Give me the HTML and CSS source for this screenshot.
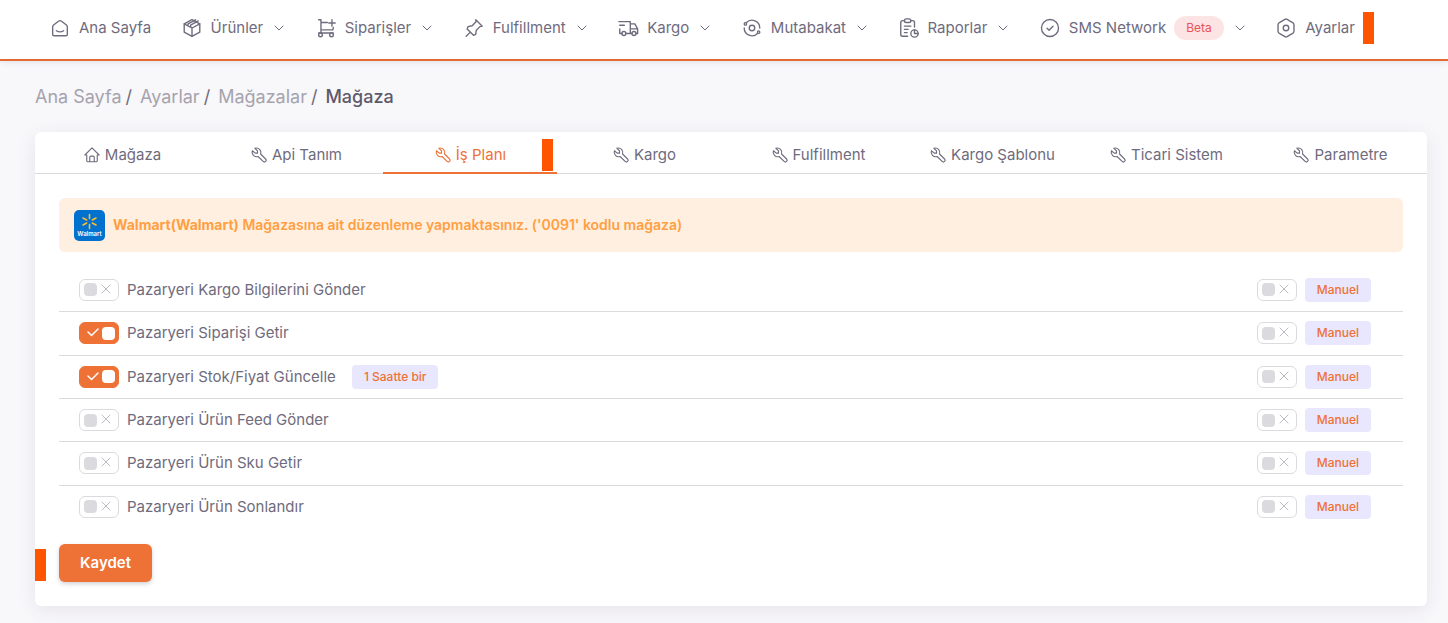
FILE: index.html
```html
<!DOCTYPE html>
<html lang="tr">
<head>
<meta charset="utf-8">
<meta name="viewport" content="width=device-width, initial-scale=1">
<title>Mağaza</title>
<link rel="stylesheet" href="styles.css">
</head>
<body>
<svg class="sprite" aria-hidden="true">
  <symbol id="chevron" viewBox="0 0 12 12"><path d="M2 4l4 4 4-4"/></symbol>
  <symbol id="smart-home" viewBox="0 0 24 24"><path d="M19 8.700l-5.300-4.100a2.700 2.700 0 0 0-3.400 0L5 8.700A2.700 2.700 0 0 0 4 11v8a1.500 1.500 0 0 0 1.500 1.500h13A1.500 1.500 0 0 0 20 19v-8a2.700 2.700 0 0 0-1-2.300z"/><path d="M8 15c2.200 1.400 5.800 1.400 8 0"/></symbol>
  <symbol id="box" viewBox="0 0 24 24"><path d="M12 2.800l8.500 4.700v9L12 21.200l-8.500-4.700v-9z"/><path d="M3.500 7.500L12 12l8.500-4.500M12 12v9M7.700 9.800V7.500l8.300-4.400M10.500 11V8.800l8.300-4.500"/></symbol>
  <symbol id="cart" viewBox="0 0 24 24"><circle cx="6" cy="19.500" r="2"/><circle cx="18" cy="19.500" r="2"/><path d="M4 3h2.500v14.500M4 17.500h16M6.500 6h7M6.500 14h13l.500-2.500M15 6.500h7M18.500 3v7"/></symbol>
  <symbol id="pin" viewBox="0 0 24 24"><path d="M14 3l7 7-2.500.500-4 4-.700 4.500-2.300 1L4.500 13l1-2.500L10 9.500l4-4zM8 16.500L3.500 21"/></symbol>
  <symbol id="truck" viewBox="0 0 24 24"><circle cx="7.500" cy="18" r="2.200"/><circle cx="18.500" cy="18" r="2.200"/><path d="M2 5h12.500v13M9.700 18h6.500M5.300 18H3v-5M3 9h5M14.500 7.500h5L22.500 13v5h-1.700M14.500 13h8"/></symbol>
  <symbol id="cycle" viewBox="0 0 24 24"><circle cx="12" cy="12" r="3"/><path d="M20.500 12A8.500 8.500 0 0 0 6 6M3.500 12A8.500 8.500 0 0 0 18 18"/><circle cx="4.800" cy="7.500" r="1.300"/><circle cx="19.200" cy="16.500" r="1.300"/></symbol>
  <symbol id="report" viewBox="0 0 24 24"><path d="M10.500 21H5a2 2 0 0 1-2-2V6a2 2 0 0 1 2-2h2M14 4h2a2 2 0 0 1 2 2v5"/><rect x="7" y="2" width="7" height="4" rx="2"/><path d="M7 10h7M7 13.500h4M7 17h3M18 14v4h4"/><circle cx="18" cy="18" r="4"/></symbol>
  <symbol id="circle-check" viewBox="0 0 24 24"><circle cx="12" cy="12" r="9.300"/><path d="M8.800 12.200l2.200 2.300 4.300-4.500"/></symbol>
  <symbol id="hexagon" viewBox="0 0 24 24"><path d="M10.800 2.600a2.400 2.400 0 0 1 2.400 0l6.500 3.900a2.400 2.400 0 0 1 1 2v7a2.400 2.400 0 0 1-1 2l-6.500 3.900a2.400 2.400 0 0 1-2.400 0l-6.500-3.900a2.400 2.400 0 0 1-1-2v-7a2.400 2.400 0 0 1 1-2z"/><circle cx="12" cy="12" r="3"/></symbol>
  <symbol id="home" viewBox="0 0 24 24"><path d="M5 12H2.500L12 2.500l9.500 9.500H19M5 12v7.500A1.500 1.500 0 0 0 6.500 21h11a1.500 1.500 0 0 0 1.500-1.500V12M9 21v-6a1.500 1.500 0 0 1 1.500-1.500h3A1.500 1.500 0 0 1 15 15v6"/></symbol>
  <symbol id="tool" viewBox="0 0 24 24"><path d="M7 9.500h3v-3L6.500 3a6 6 0 0 1 7.600 7.700l6.700 6.600a2.300 2.300 0 0 1-3.300 3.300l-6.700-6.600A6 6 0 0 1 3.200 6.400z"/></symbol>
  <symbol id="cross" viewBox="0 0 12 12"><path d="M2 2l8 8M10 2l-8 8"/></symbol>
  <symbol id="check" viewBox="0 0 12 12"><path d="M1 6l3.500 3.500L11 3"/></symbol>
</svg>

<header class="topbar">
  <nav class="menu" aria-label="Ana menü">
    <a class="menu-item" href="#"><svg class="icon"><use href="#smart-home"/></svg>Ana Sayfa</a>
    <a class="menu-item" href="#"><svg class="icon"><use href="#box"/></svg>Ürünler<svg class="chevron"><use href="#chevron"/></svg></a>
    <a class="menu-item" href="#"><svg class="icon"><use href="#cart"/></svg>Siparişler<svg class="chevron"><use href="#chevron"/></svg></a>
    <a class="menu-item" href="#"><svg class="icon"><use href="#pin"/></svg>Fulfillment<svg class="chevron"><use href="#chevron"/></svg></a>
    <a class="menu-item" href="#"><svg class="icon"><use href="#truck"/></svg>Kargo<svg class="chevron"><use href="#chevron"/></svg></a>
    <a class="menu-item" href="#"><svg class="icon"><use href="#cycle"/></svg>Mutabakat<svg class="chevron"><use href="#chevron"/></svg></a>
    <a class="menu-item" href="#"><svg class="icon"><use href="#report"/></svg>Raporlar<svg class="chevron"><use href="#chevron"/></svg></a>
    <a class="menu-item" href="#"><svg class="icon"><use href="#circle-check"/></svg>SMS Network<span class="beta">Beta</span><svg class="chevron"><use href="#chevron"/></svg></a>
    <a class="menu-item" href="#"><svg class="icon"><use href="#hexagon"/></svg>Ayarlar<span class="marker"></span></a>
  </nav>
</header>

<main class="page">
  <nav class="breadcrumb" aria-label="Konum">
    <a href="#">Ana Sayfa</a><span class="slash">/</span><a href="#">Ayarlar</a><span class="slash">/</span><a href="#">Mağazalar</a><span class="slash">/</span><span class="current">Mağaza</span>
  </nav>

  <section class="card">
    <div class="tabs" role="tablist">
      <button class="tab" type="button" role="tab"><svg class="tab-icon"><use href="#home"/></svg>Mağaza</button>
      <button class="tab" type="button" role="tab"><svg class="tab-icon"><use href="#tool"/></svg>Api Tanım</button>
      <button class="tab active" type="button" role="tab" aria-selected="true"><svg class="tab-icon"><use href="#tool"/></svg>İş Planı<span class="marker tab-marker"></span></button>
      <button class="tab" type="button" role="tab"><svg class="tab-icon"><use href="#tool"/></svg>Kargo</button>
      <button class="tab" type="button" role="tab"><svg class="tab-icon"><use href="#tool"/></svg>Fulfillment</button>
      <button class="tab" type="button" role="tab"><svg class="tab-icon"><use href="#tool"/></svg>Kargo Şablonu</button>
      <button class="tab" type="button" role="tab"><svg class="tab-icon"><use href="#tool"/></svg>Ticari Sistem</button>
      <button class="tab" type="button" role="tab"><svg class="tab-icon"><use href="#tool"/></svg>Parametre</button>
    </div>

    <form class="card-body">
      <div class="alert">
        <svg class="logo" viewBox="0 0 31 31" role="img" aria-label="Walmart">
          <rect width="31" height="31" rx="5" fill="#0071ce"/>
          <path d="M15.500 4.500v4M15.500 14.500v4M9 8l3.700 2M22 8l-3.700 2M9 15l3.700-2M22 15l-3.700-2" stroke="#fdbb30" stroke-width="1.600" stroke-linecap="round"/>
          <text class="logo-text" x="15.500" y="26" text-anchor="middle">Walmart</text>
        </svg>
        <p class="alert-text"><strong>Walmart(Walmart)</strong> Mağazasına ait düzenleme yapmaktasınız. ('0091' kodlu mağaza)</p>
      </div>

      <div class="plans">
        <div class="plan">
          <label class="option"><span class="switch"><input type="checkbox"><svg class="off"><use href="#cross"/></svg><svg class="on"><use href="#check"/></svg></span>Pazaryeri Kargo Bilgilerini Gönder</label>
          <label class="option manual"><span class="switch"><input type="checkbox"><svg class="off"><use href="#cross"/></svg><svg class="on"><use href="#check"/></svg></span><span class="tag">Manuel</span></label>
        </div>
        <div class="plan">
          <label class="option"><span class="switch"><input type="checkbox" checked><svg class="off"><use href="#cross"/></svg><svg class="on"><use href="#check"/></svg></span>Pazaryeri Siparişi Getir</label>
          <label class="option manual"><span class="switch"><input type="checkbox"><svg class="off"><use href="#cross"/></svg><svg class="on"><use href="#check"/></svg></span><span class="tag">Manuel</span></label>
        </div>
        <div class="plan">
          <label class="option"><span class="switch"><input type="checkbox" checked><svg class="off"><use href="#cross"/></svg><svg class="on"><use href="#check"/></svg></span>Pazaryeri Stok/Fiyat Güncelle</label>
          <span class="tag">1 Saatte bir</span>
          <label class="option manual"><span class="switch"><input type="checkbox"><svg class="off"><use href="#cross"/></svg><svg class="on"><use href="#check"/></svg></span><span class="tag">Manuel</span></label>
        </div>
        <div class="plan">
          <label class="option"><span class="switch"><input type="checkbox"><svg class="off"><use href="#cross"/></svg><svg class="on"><use href="#check"/></svg></span>Pazaryeri Ürün Feed Gönder</label>
          <label class="option manual"><span class="switch"><input type="checkbox"><svg class="off"><use href="#cross"/></svg><svg class="on"><use href="#check"/></svg></span><span class="tag">Manuel</span></label>
        </div>
        <div class="plan">
          <label class="option"><span class="switch"><input type="checkbox"><svg class="off"><use href="#cross"/></svg><svg class="on"><use href="#check"/></svg></span>Pazaryeri Ürün Sku Getir</label>
          <label class="option manual"><span class="switch"><input type="checkbox"><svg class="off"><use href="#cross"/></svg><svg class="on"><use href="#check"/></svg></span><span class="tag">Manuel</span></label>
        </div>
        <div class="plan">
          <label class="option"><span class="switch"><input type="checkbox"><svg class="off"><use href="#cross"/></svg><svg class="on"><use href="#check"/></svg></span>Pazaryeri Ürün Sonlandır</label>
          <label class="option manual"><span class="switch"><input type="checkbox"><svg class="off"><use href="#cross"/></svg><svg class="on"><use href="#check"/></svg></span><span class="tag">Manuel</span></label>
        </div>
      </div>

      <div class="actions">
        <span class="marker save-marker"></span>
        <button class="save" type="button">Kaydet</button>
      </div>
    </form>
  </section>
</main>
</body>
</html>
```
FILE: styles.css
```css
* {
  box-sizing: border-box;
}

body {
  margin: 0;
  background: #f8f7fa;
  color: #6f6b7d;
  font: 15px/22px Inter, "Liberation Sans", sans-serif;
}

svg {
  flex: none;
  fill: none;
  stroke: currentColor;
  stroke-width: 1.5;
  stroke-linecap: round;
  stroke-linejoin: round;
}

a {
  color: inherit;
  text-decoration: none;
}

.sprite {
  display: none;
}

.marker {
  width: 11px;
  height: 32px;
  background: #ff5500;
}

/* Top menu */
.topbar {
  padding: 0 74px 0 49px;
  background: #fff;
  border-bottom: 2px solid #e46a34;
  box-shadow: 0 1px 6px rgba(75, 70, 92, 0.12);
}

.menu {
  display: flex;
  justify-content: space-between;
  height: 59px;
  padding-bottom: 4px;
}

.menu-item {
  display: flex;
  align-items: center;
  gap: 8px;
  white-space: nowrap;
}

.icon {
  width: 22px;
  height: 22px;
}

.chevron {
  width: 12px;
  height: 12px;
  margin-left: 2px;
  stroke-width: 1;
}

.beta {
  padding: 1px 12px;
  border-radius: 12px;
  background: #fce4e5;
  color: #ea5455;
  font-size: 12px;
}

/* Breadcrumb */
.page {
  padding: 0 21px 17px 35px;
}

.breadcrumb {
  display: flex;
  padding: 22px 0;
  color: #a5a3ae;
  font-size: 18px;
  line-height: 27px;
}

.slash {
  padding: 0 8px 0 4px;
  color: #6f6b7d;
}

.current {
  color: #5d596c;
  font-weight: 500;
}

/* Card and tabs */
.card {
  background: #fff;
  border-radius: 6px;
  box-shadow: 0 4px 18px rgba(75, 70, 92, 0.1);
}

.tabs {
  display: grid;
  grid-template-columns: repeat(8, 1fr);
  box-shadow: inset 0 -1px #dbdade;
}

.tab {
  position: relative;
  display: flex;
  align-items: center;
  justify-content: center;
  gap: 4px;
  height: 42px;
  padding: 6px 0 0;
  border: 0;
  border-bottom: 2px solid transparent;
  background: none;
  color: inherit;
  font: inherit;
}

.tab.active {
  border-bottom-color: #ee7136;
  color: #ee7136;
}

.tab-icon {
  width: 18px;
  height: 18px;
}

.tab-marker {
  position: absolute;
  top: 7px;
  right: 4px;
}

.card-body {
  padding: 24px;
}

.alert {
  display: flex;
  align-items: center;
  gap: 8px;
  min-height: 54px;
  padding: 0 15px;
  border-radius: 6px;
  background: #ffefe0;
  color: #ff9f43;
}

.alert-text {
  margin: 0;
  font-size: 14px;
  font-weight: 600;
}

.alert strong {
  font-weight: 700;
}

.logo {
  width: 31px;
  height: 31px;
  stroke: none;
}

.logo-text {
  fill: #fff;
  font-size: 6px;
  font-weight: 600;
}

/* Plan rows */
.plans {
  display: grid;
  grid-auto-rows: 1fr;
  min-height: 260px;
  margin-top: 16px;
}

.plan {
  display: flex;
  align-items: center;
  gap: 16px;
  padding: 0 32px 0 20px;
}

.plan + .plan {
  border-top: 1px solid #dbdade;
}

.option {
  display: flex;
  align-items: center;
  gap: 8px;
}

.manual {
  margin-left: auto;
}

.switch {
  position: relative;
  display: flex;
}

.switch input {
  display: flex;
  align-items: center;
  width: 40px;
  height: 22px;
  margin: 0;
  padding: 0 4px;
  border: 1px solid #dbdade;
  border-radius: 6px;
  background: #fff;
  appearance: none;
}

.switch input::before {
  content: "";
  width: 13px;
  height: 13px;
  border-radius: 4px;
  background: #dbdade;
}

.switch input:checked {
  justify-content: flex-end;
  padding-right: 3px;
  border-color: #ee7136;
  background: #ee7136;
}

.switch input:checked::before {
  background: #fff;
}

.switch svg {
  position: absolute;
  top: 4px;
  width: 12px;
  height: 12px;
  pointer-events: none;
}

.off {
  right: 7px;
  color: #bdbbc4;
  stroke-width: 1;
}

.on {
  left: 8px;
  color: #fff;
}

.switch input:checked ~ .off,
.switch input:not(:checked) ~ .on {
  display: none;
}

.tag {
  padding: 1px 12px;
  border-radius: 4px;
  background: #e9e7fd;
  color: #ee7136;
  font-size: 12px;
  font-weight: 500;
}

/* Save */
.actions {
  position: relative;
  padding-top: 16px;
}

.save {
  height: 38px;
  padding: 0 21px;
  border: 0;
  border-radius: 6px;
  background: #ee7136;
  box-shadow: 0 2px 4px rgba(75, 70, 92, 0.25);
  color: #fff;
  font: inherit;
  font-weight: 600;
}

.save-marker {
  position: absolute;
  top: 21px;
  left: -24px;
}
```
